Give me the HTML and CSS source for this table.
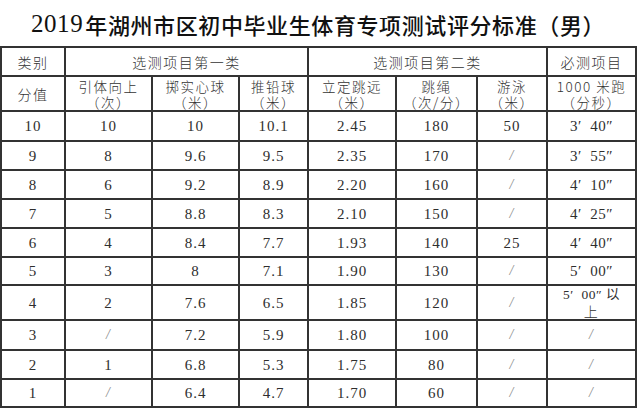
FILE: index.html
```html
<!DOCTYPE html>
<html lang="zh-CN">
<head>
<meta charset="utf-8">
<title>2019年湖州市区初中毕业生体育专项测试评分标准（男）</title>
<link rel="stylesheet" href="styles.css">
</head>
<body>
<div class="page">
  <h1 class="title"><span class="year">2019</span> 年湖州市区初中毕业生体育专项测试评分标准（男）</h1>
  <table class="score">
    <colgroup>
      <col class="c1"><col class="c2"><col class="c3"><col class="c4">
      <col class="c5"><col class="c6"><col class="c7"><col class="c8">
    </colgroup>
    <tbody>
      <tr>
        <td class="cn">类别</td>
        <td class="cn" colspan="3">选测项目第一类</td>
        <td class="cn" colspan="3">选测项目第二类</td>
        <td class="cn">必测项目</td>
      </tr>
      <tr class="r-tall">
        <td class="cn">分值</td>
        <td class="cn two"><div class="ln">引体向上</div><div class="ln">（次）</div></td>
        <td class="cn two"><div class="ln">掷实心球</div><div class="ln">（米）</div></td>
        <td class="cn two"><div class="ln">推铅球</div><div class="ln">（米）</div></td>
        <td class="cn two"><div class="ln">立定跳远</div><div class="ln">（米）</div></td>
        <td class="cn two"><div class="ln">跳绳</div><div class="ln">（次/分）</div></td>
        <td class="cn two"><div class="ln">游泳</div><div class="ln">（米）</div></td>
        <td class="cn two"><div class="ln">1000 米跑</div><div class="ln">（分秒）</div></td>
      </tr>
      <tr class="r-first"><td>10</td><td>10</td><td>10</td><td>10.1</td><td>2.45</td><td>180</td><td>50</td><td class="time">3′&nbsp;&nbsp;40″</td></tr>
      <tr><td>9</td><td>8</td><td>9.6</td><td>9.5</td><td>2.35</td><td>170</td><td class="na">/</td><td class="time">3′&nbsp;&nbsp;55″</td></tr>
      <tr><td>8</td><td>6</td><td>9.2</td><td>8.9</td><td>2.20</td><td>160</td><td class="na">/</td><td class="time">4′&nbsp;&nbsp;10″</td></tr>
      <tr><td>7</td><td>5</td><td>8.8</td><td>8.3</td><td>2.10</td><td>150</td><td class="na">/</td><td class="time">4′&nbsp;&nbsp;25″</td></tr>
      <tr><td>6</td><td>4</td><td>8.4</td><td>7.7</td><td>1.93</td><td>140</td><td>25</td><td class="time">4′&nbsp;&nbsp;40″</td></tr>
      <tr class="r-short"><td>5</td><td>3</td><td>8</td><td>7.1</td><td>1.90</td><td>130</td><td class="na">/</td><td class="time">5′&nbsp;&nbsp;00″</td></tr>
      <tr class="r-tall"><td>4</td><td>2</td><td>7.6</td><td>6.5</td><td>1.85</td><td>120</td><td class="na">/</td><td class="time two"><div class="ln">5′&nbsp;&nbsp;00″ 以</div><div class="ln cn-inline">上</div></td></tr>
      <tr class="r-first"><td>3</td><td class="na">/</td><td>7.2</td><td>5.9</td><td>1.80</td><td>100</td><td class="na">/</td><td class="na">/</td></tr>
      <tr><td>2</td><td>1</td><td>6.8</td><td>5.3</td><td>1.75</td><td>80</td><td class="na">/</td><td class="na">/</td></tr>
      <tr class="r-short"><td>1</td><td class="na">/</td><td>6.4</td><td>4.7</td><td>1.70</td><td>60</td><td class="na">/</td><td class="na">/</td></tr>
    </tbody>
  </table>
</div>
</body>
</html>
```
FILE: styles.css
```css
html, body {
  margin: 0;
  padding: 0;
  background: #ffffff;
}

.page {
  width: 640px;
  height: 408px;
  overflow: hidden;
  font-family: "Liberation Serif", "Noto Sans CJK SC", serif;
  color: #2a2a2a;
}

.title {
  margin: 0;
  height: 46px;
  display: flex;
  align-items: center;
  justify-content: center;
  padding-right: 4px;
  padding-top: 1px;
  font-family: "Liberation Serif", "Noto Sans CJK SC", serif;
  font-size: 22px;
  font-weight: 500;
  color: #111111;
  letter-spacing: 0.6px;
  box-sizing: border-box;
}

.year {
  font-size: 25px;
  font-weight: normal;
  margin-right: 2px;
}

.score {
  border-collapse: collapse;
  table-layout: fixed;
  width: 637px;
}

.c1 { width: 64px; }
.c2 { width: 87px; }
.c3 { width: 87px; }
.c4 { width: 69px; }
.c5 { width: 88px; }
.c6 { width: 81px; }
.c7 { width: 70px; }
.c8 { width: 89px; }

.score td {
  border: 2px solid #333333;
  height: 27px;
  padding: 0;
  text-align: center;
  vertical-align: middle;
  font-size: 15px;
  line-height: 16px;
  letter-spacing: 1px;
  color: #2e2e2e;
  overflow: hidden;
}

.score tr.r-first td {
  height: 28px;
}

.score tr.r-short td {
  height: 26px;
}

.score tr.r-tall td {
  height: 33px;
}

.score td.cn,
.cn-inline {
  font-family: "Noto Sans CJK SC", sans-serif;
  font-weight: 300;
  font-size: 14px;
  letter-spacing: 1.5px;
  color: #333333;
}

.score td.two {
  font-size: 13.5px;
}

.ln {
  height: 16px;
  line-height: 16px;
  overflow: visible;
  white-space: nowrap;
}

.score td.time {
  font-family: "Liberation Serif", "Noto Sans CJK SC", serif;
  letter-spacing: 0.5px;
}

.score td.na {
  color: #8a8a8a;
  font-style: italic;
  font-size: 14px;
}
```
